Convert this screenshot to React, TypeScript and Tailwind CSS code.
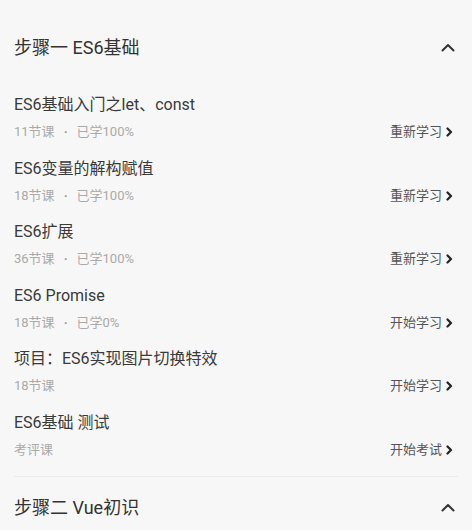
import React from 'react';

type Lesson = {
  title: string;
  count: string;
  progress?: string;
  action: string;
};

const lessons: Lesson[] = [
  { title: 'ES6基础入门之let、const', count: '11节课', progress: '已学100%', action: '重新学习' },
  { title: 'ES6变量的解构赋值', count: '18节课', progress: '已学100%', action: '重新学习' },
  { title: 'ES6扩展', count: '36节课', progress: '已学100%', action: '重新学习' },
  { title: 'ES6 Promise', count: '18节课', progress: '已学0%', action: '开始学习' },
  { title: '项目：ES6实现图片切换特效', count: '18节课', action: '开始学习' },
  { title: 'ES6基础 测试', count: '考评课', action: '开始考试' },
];

const font = { fontFamily: 'Roboto, "Noto Sans CJK SC", sans-serif' };

function ChevronUp() {
  return (
    <svg width="14" height="9" viewBox="0 0 14 9" fill="none">
      <path d="M1.5 7.5L7 2l5.5 5.5" stroke="#333" strokeWidth="2" strokeLinecap="round" strokeLinejoin="round" />
    </svg>
  );
}

function ChevronRight() {
  return (
    <svg width="7" height="10" viewBox="0 0 7 10" fill="none" className="ml-[4px]">
      <path d="M1.5 1.5L5 5l-3.5 3.5" stroke="#222" strokeWidth="2.2" strokeLinecap="round" strokeLinejoin="round" />
    </svg>
  );
}

function StepHeader({ title, className }: { title: string; className: string }) {
  return (
    <div className={`flex items-center justify-between pl-[14px] pr-[17px] ${className}`}>
      <span className="text-[18px] text-[#333]">{title}</span>
      <ChevronUp />
    </div>
  );
}

export default function App() {
  return (
    <div className="w-[472px] h-[530px] overflow-hidden bg-[#f7f7f7]" style={font}>
      <StepHeader title="步骤一 ES6基础" className="h-[94px]" />

      <div className="px-[14px]">
        {lessons.map((l) => (
          <div key={l.title} className="h-[63.6px] flex flex-col">
            <div className="text-[16px] leading-[22px] text-[#3a3a3a]">{l.title}</div>
            <div className="mt-[7px] flex items-center justify-between leading-[18px]">
              <span className="text-[13px] text-[#aaa]">
                {l.count}
                {l.progress && (
                  <>
                    <span className="mx-[9px] font-bold text-[#999]">·</span>
                    {l.progress}
                  </>
                )}
              </span>
              <span className="flex items-center text-[13px] text-[#555] pr-[5px]">
                {l.action}
                <ChevronRight />
              </span>
            </div>
          </div>
        ))}
        <div className="h-px bg-[#ebebeb]" />
      </div>

      <StepHeader title="步骤二 Vue初识" className="h-[62px]" />
    </div>
  );
}
